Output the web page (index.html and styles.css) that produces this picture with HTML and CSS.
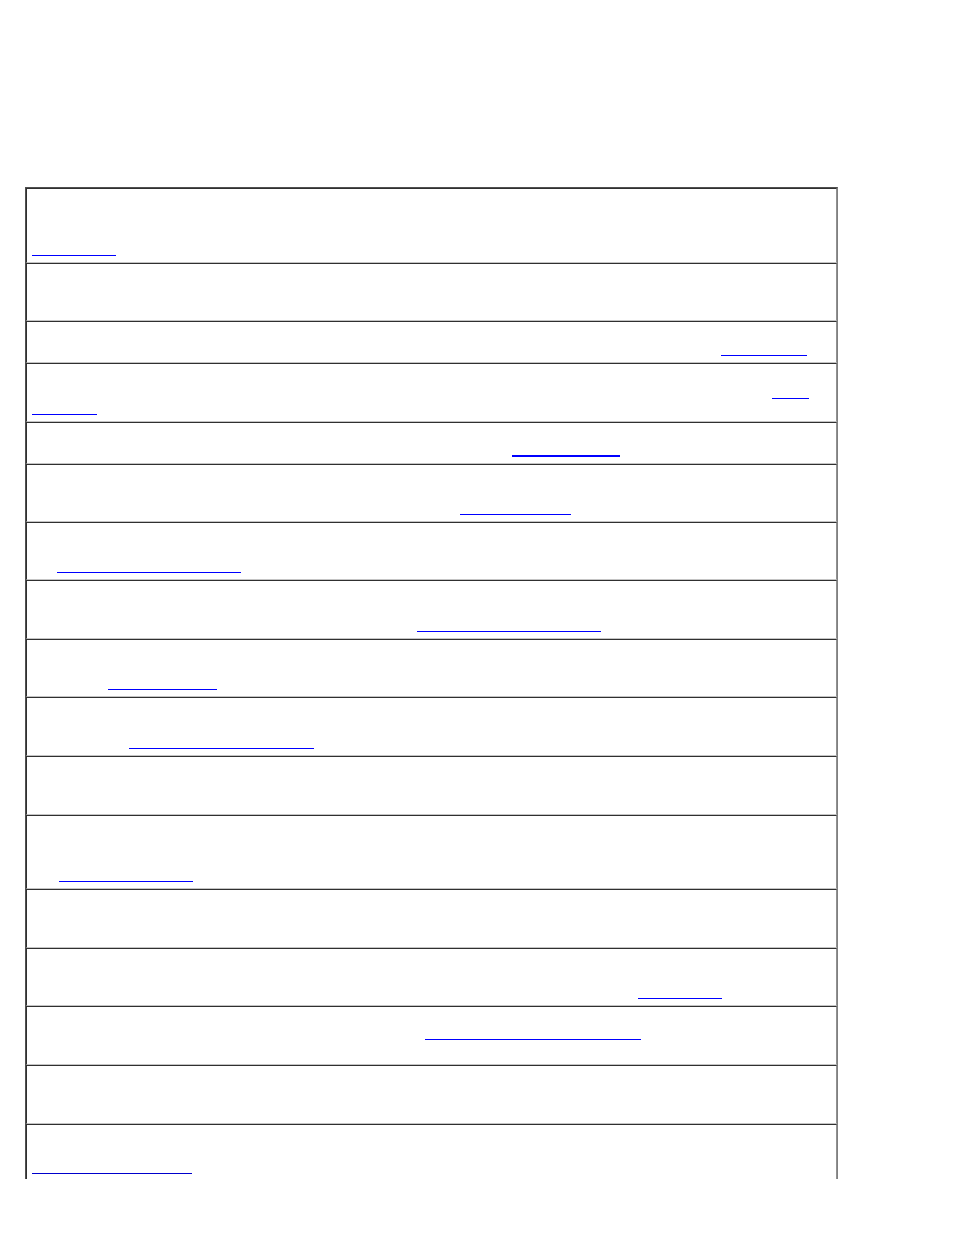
FILE: index.html
```html
<!DOCTYPE html>
<html>
<head>
<meta charset="utf-8">
<link rel="stylesheet" href="styles.css">
<title>Table</title>
</head>
<body>
<div class="page">
  <div class="clip">
    <table class="grid">
      <tr><td><div class="c h75"><div class="ln"><a href="#" class="lk l1"></a></div></div></td></tr>
      <tr><td><div class="c h58"></div></td></tr>
      <tr><td><div class="c h42"><div class="ln"><a href="#" class="lk l3"></a></div></div></td></tr>
      <tr><td><div class="c h59"><div class="ln"><a href="#" class="lk l4a"></a></div><div class="ln"><a href="#" class="lk l4b"></a></div></div></td></tr>
      <tr><td><div class="c h42"><div class="ln"><a href="#" class="lk bold l5"></a></div></div></td></tr>
      <tr><td><div class="c h58"><div class="ln"><a href="#" class="lk l6"></a></div></div></td></tr>
      <tr><td><div class="c h58"><div class="ln"><a href="#" class="lk l7"></a></div></div></td></tr>
      <tr><td><div class="c h59"><div class="ln"><a href="#" class="lk l8"></a></div></div></td></tr>
      <tr><td><div class="c h58"><div class="ln"><a href="#" class="lk l9"></a></div></div></td></tr>
      <tr><td><div class="c h59"><div class="ln"><a href="#" class="lk l10"></a></div></div></td></tr>
      <tr><td><div class="c h59"></div></td></tr>
      <tr><td><div class="c h74"><div class="ln"><a href="#" class="lk l12"></a></div></div></td></tr>
      <tr><td><div class="c h59"></div></td></tr>
      <tr><td><div class="c h58"><div class="ln"><a href="#" class="lk l14"></a></div></div></td></tr>
      <tr><td><div class="c h59"><div class="ln"><a href="#" class="lk l15"></a></div><div class="ln gap"></div></div></td></tr>
      <tr><td><div class="c h59"></div></td></tr>
      <tr><td><div class="c h80 top"><div class="ln first"><a href="#" class="lk l17"></a></div></div></td></tr>
    </table>
  </div>
</div>
</body>
</html>
```

FILE: styles.css
```css
html, body {
  margin: 0;
  padding: 0;
  background: #ffffff;
  font-family: "Liberation Sans", Arial, sans-serif;
  font-size: 13px;
}

.page {
  padding-top: 187px;
  padding-left: 25px;
}

.clip {
  height: 992px;
  overflow: hidden;
  width: 813px;
}

.grid {
  width: 813px;
  border-spacing: 0;
  border-collapse: separate;
  border-style: solid;
  border-width: 1px;
  border-color: #505050 #808080 #808080 #505050;
}

.grid td {
  padding: 0;
  border-style: solid;
  border-width: 1px;
  border-color: #303030 #909090 #c4c4c4 #303030;
  vertical-align: bottom;
}

.c {
  box-sizing: border-box;
  padding: 0 5px 6px 5px;
  display: flex;
  flex-direction: column;
  justify-content: flex-end;
}

.c.top {
  justify-content: flex-start;
  padding-top: 33px;
}

.h42 { height: 40px; }
.h58 { height: 56px; }
.h59 { height: 57px; }
.h74 { height: 72px; }
.h75 { height: 73px; }
.h80 { height: 78px; }

.ln {
  height: 16px;
  display: flex;
  align-items: flex-end;
}

.ln.gap { height: 18px; }

.lk {
  display: block;
  height: 0;
  border-bottom: 1px solid #0000ff;
}

.lk.bold { border-bottom-width: 2px; }

.l1 { margin-left: 0; width: 84px; }
.l3 { margin-left: 689px; width: 86px; }
.l4a { margin-left: 740px; width: 37px; }
.l4b { margin-left: 0; width: 65px; }
.l5 { margin-left: 480px; width: 108px; }
.l6 { margin-left: 428px; width: 111px; }
.l7 { margin-left: 25px; width: 184px; }
.l8 { margin-left: 385px; width: 184px; }
.l9 { margin-left: 76px; width: 109px; }
.l10 { margin-left: 97px; width: 185px; }
.l12 { margin-left: 27px; width: 134px; }
.l14 { margin-left: 606px; width: 84px; }
.l15 { margin-left: 393px; width: 216px; }
.l17 { margin-left: 0; width: 160px; border-bottom-color: #0000cc; }
```
